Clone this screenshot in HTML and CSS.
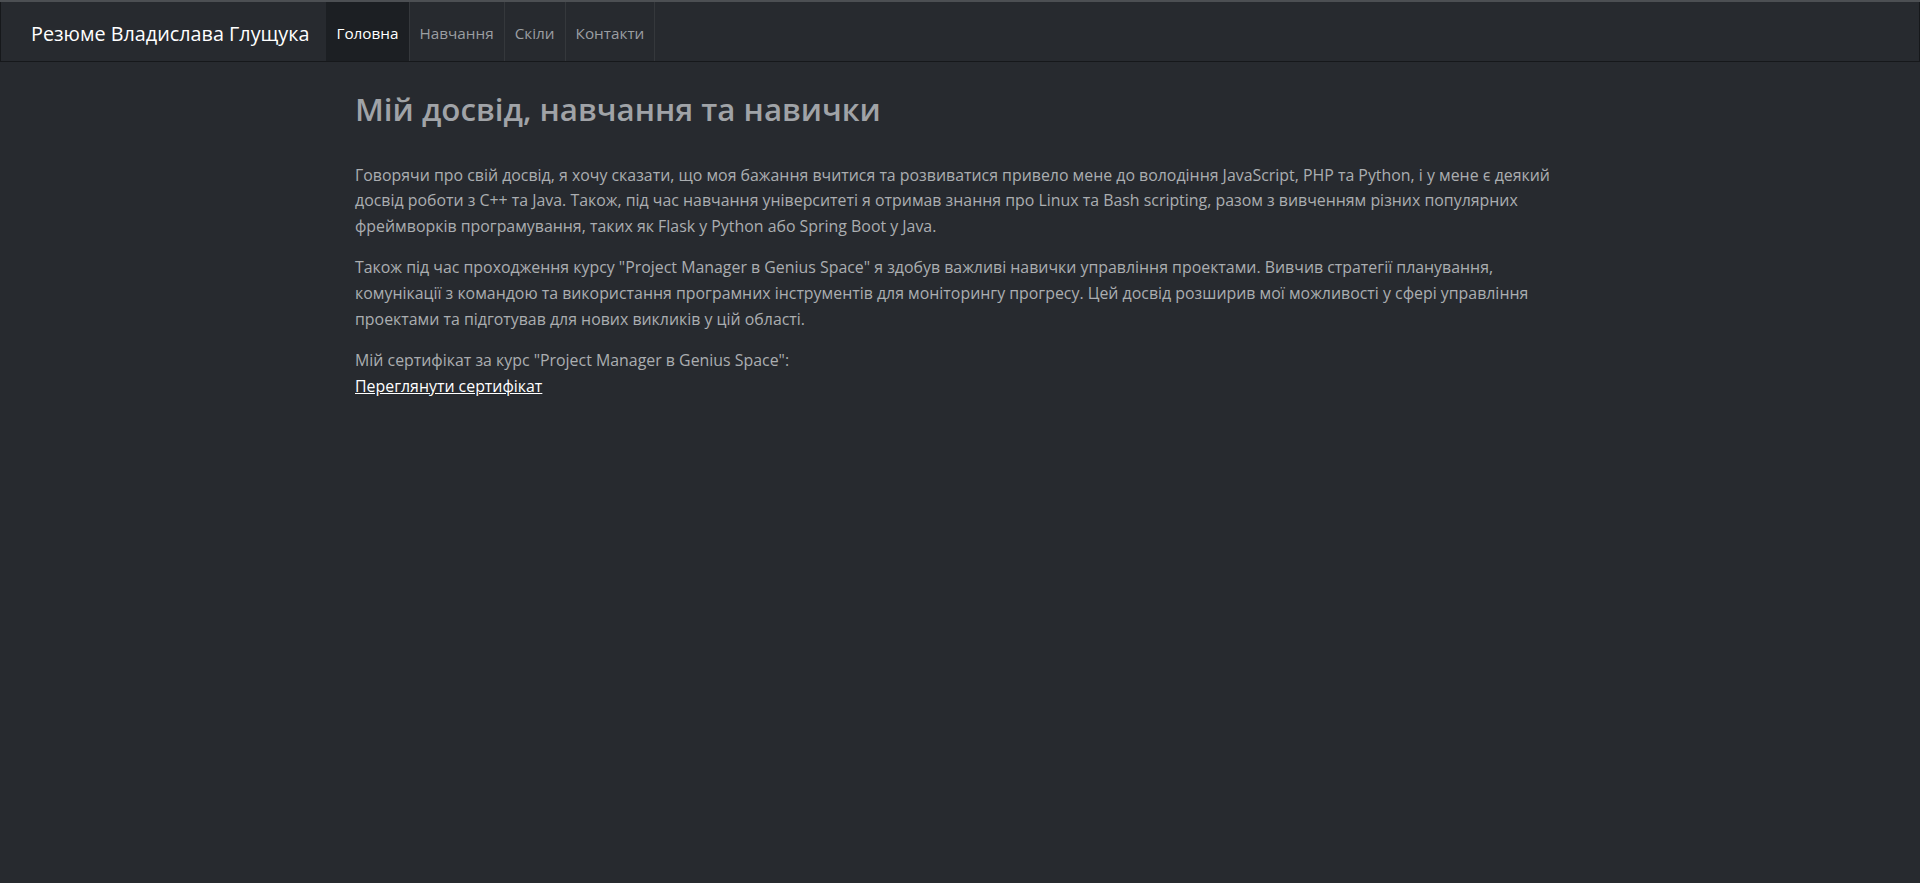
FILE: index.html
```html
<!DOCTYPE html>
<html lang="uk">
<head>
<meta charset="utf-8">
<title>Резюме Владислава Глущука</title>
<link rel="stylesheet" href="styles.css">
</head>
<body>
<div class="topline"></div>
<nav class="navbar">
  <a class="brand" href="#">Резюме Владислава Глущука</a>
  <ul class="nav">
    <li class="nav-item active"><a href="#">Головна</a></li>
    <li class="nav-item"><a href="#">Навчання</a></li>
    <li class="nav-item"><a href="#">Скіли</a></li>
    <li class="nav-item"><a href="#">Контакти</a></li>
  </ul>
</nav>
<main class="container">
  <h1 class="title">Мій досвід, навчання та навички</h1>
  <p class="text">Говорячи про свій досвід, я хочу сказати, що моя бажання вчитися та розвиватися привело мене до володіння JavaScript, PHP та Python, і у мене є деякий досвід роботи з C++ та Java. Також, під час навчання університеті я отримав знання про Linux та Bash scripting, разом з вивченням різних популярних фреймворків програмування, таких як Flask у Python або Spring Boot у Java.</p>
  <p class="text">Також під час проходження курсу "Project Manager в Genius Space" я здобув важливі навички управління проектами. Вивчив стратегії планування, комунікації з командою та використання програмних інструментів для моніторингу прогресу. Цей досвід розширив мої можливості у сфері управління проектами та підготував для нових викликів у цій області.</p>
  <p class="text">Мій сертифікат за курс "Project Manager в Genius Space":<br><a class="link" href="#">Переглянути сертифікат</a></p>
</main>
</body>
</html>
```
FILE: styles.css
```css
html, body {
  margin: 0;
  padding: 0;
}
body {
  background: #272a2f;
  font-family: "Open Sans", "Noto Sans", sans-serif;
  color: #abaeb1;
  min-height: 883px;
}
.topline {
  height: 2px;
  background: #4c4f53;
}
.navbar {
  display: flex;
  align-items: stretch;
  height: 59px;
  border: 1px solid #16181b;
  border-top: 0;
  background: #272a2f;
}
.brand {
  display: flex;
  align-items: center;
  padding: 4px 17px 0 30px;
  color: #ffffff;
  font-size: 19.8px;
  text-decoration: none;
  white-space: nowrap;
}
.nav {
  display: flex;
  list-style: none;
  margin: 0;
  padding: 0;
}
.nav-item {
  display: flex;
  border-right: 1px solid #35383c;
}
.nav-item a {
  display: flex;
  align-items: center;
  padding: 3px 10px 0;
  color: #9b9ea2;
  font-size: 15.3px;
  text-decoration: none;
}
.nav-item.active {
  background: #1c1f23;
}
.nav-item.active a {
  color: #ffffff;
}
.container {
  width: 1210px;
  margin: 0 auto;
  padding-top: 29px;
}
.title {
  margin: 0 0 34px;
  font-size: 31.3px;
  font-weight: 600;
  line-height: 1.2;
  color: #a0a3a7;
}
.text {
  margin: 0 0 16px;
  font-size: 15.9px;
  line-height: 25.6px;
}
.link {
  color: #ffffff;
  text-decoration: underline;
}
```
